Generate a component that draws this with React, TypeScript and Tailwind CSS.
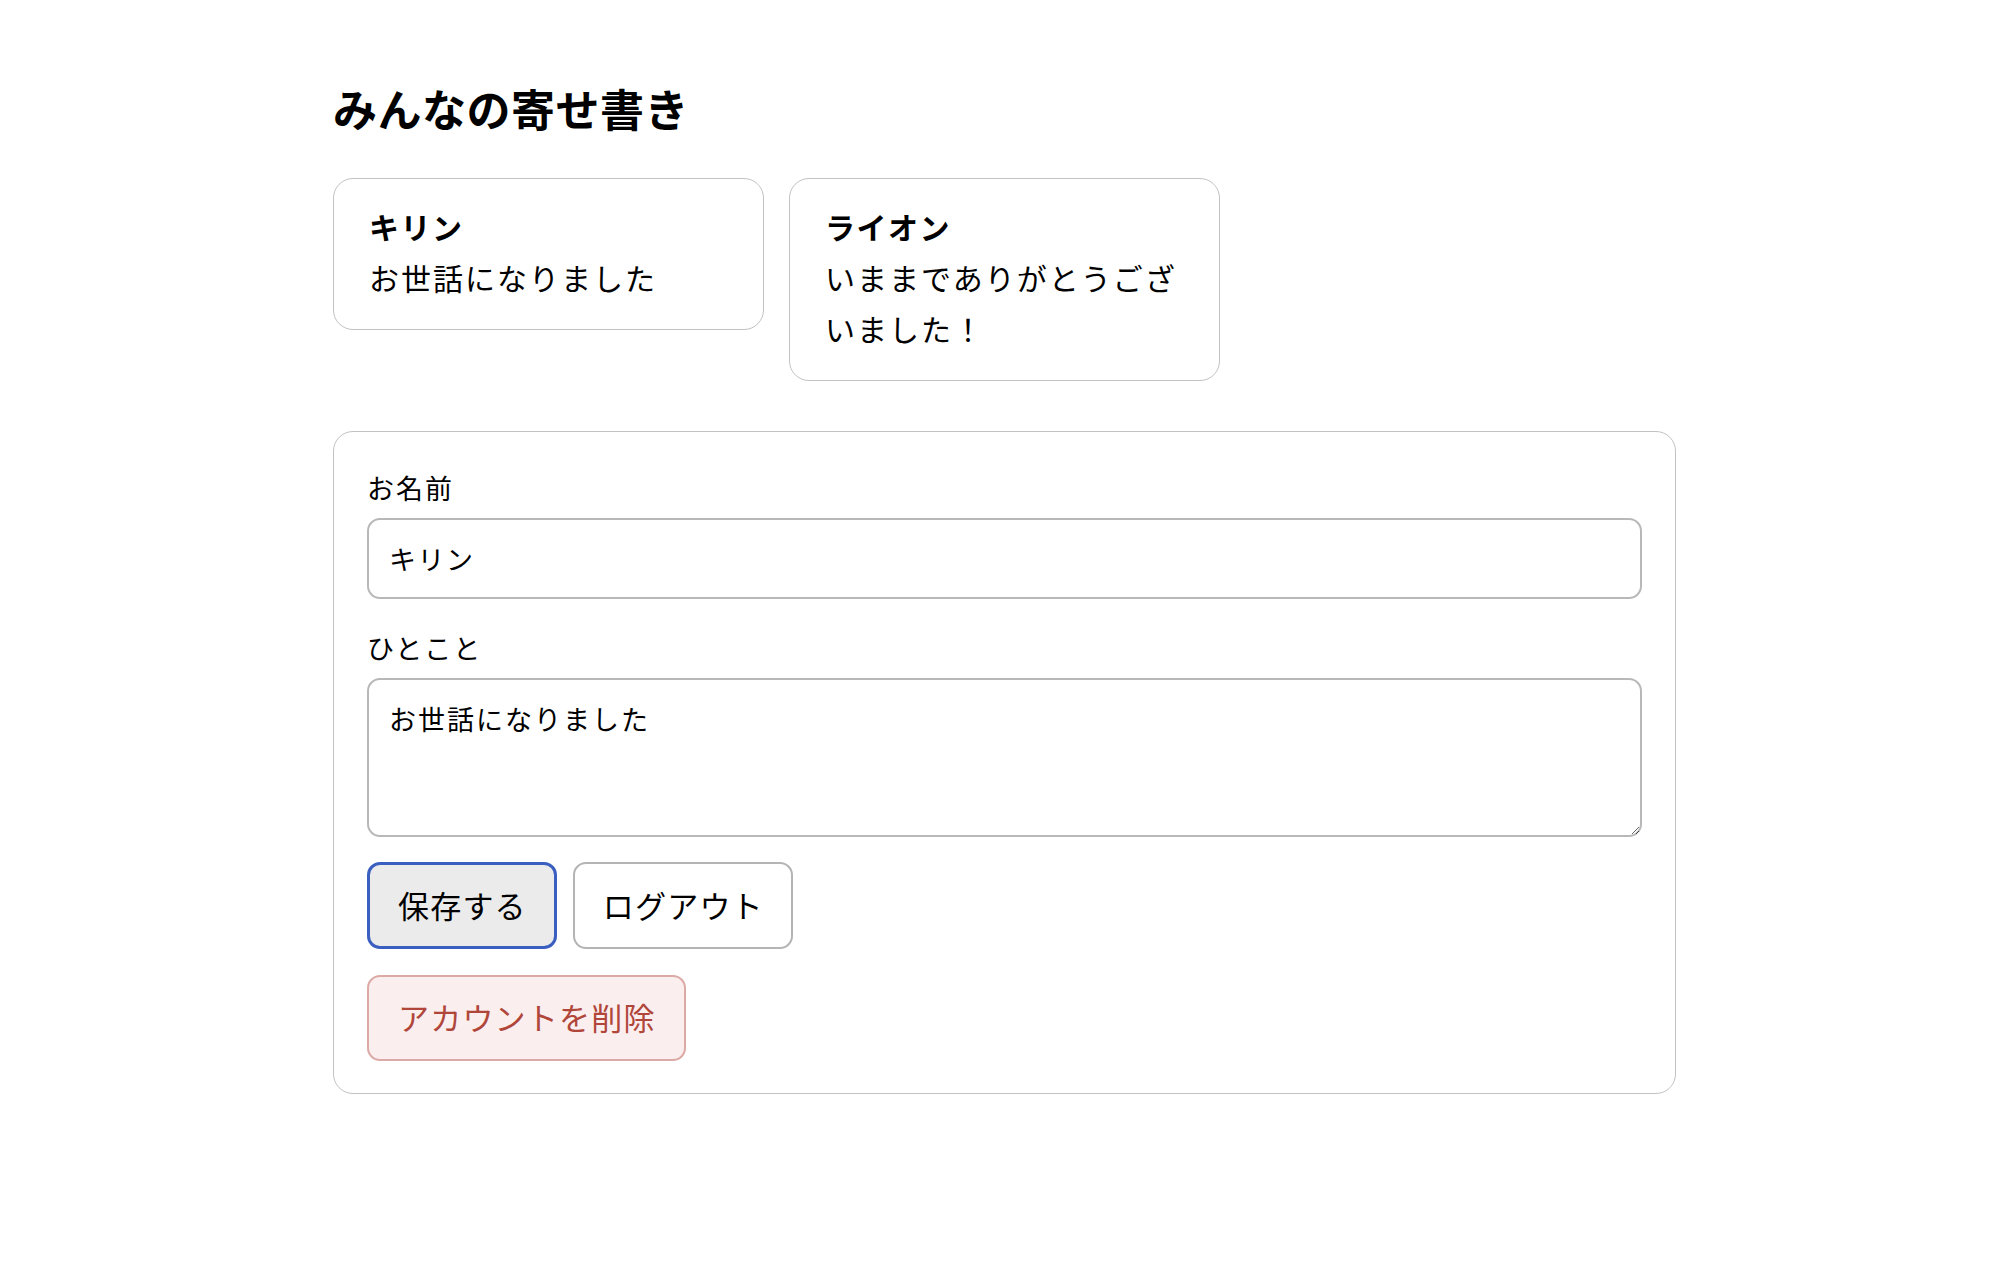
import React from "react";

const cards = [
  { name: "キリン", msg: "お世話になりました" },
  { name: "ライオン", msg: "いままでありがとうございました！" },
];

export default function App() {
  return (
    <div className="min-h-screen bg-white text-black font-['Noto_Sans_CJK_JP','Noto_Sans',sans-serif]">
      <div className="pl-[333px] pt-[78px] pb-[120px]">
        <h1 className="text-[44px] leading-[60px] font-bold mb-[40px] tracking-[0.5px]">みんなの寄せ書き</h1>
        <div className="flex items-start gap-[25px]">
          {cards.map((c) => (
            <div
              key={c.name}
              className="w-[431px] border border-[#c2c2c2] rounded-[20px] pl-[35px] pr-[34px] pt-[22px] pb-[26px] text-[30px] leading-[51px]"
            >
              <div className="font-bold tracking-[1.5px]">{c.name}</div>
              <div className="tracking-[2px]">{c.msg}</div>
            </div>
          ))}
        </div>
        <form
          className="mt-[50px] w-[1343px] border border-[#c2c2c2] rounded-[20px] px-[33px] pt-[36px] pb-[32px]"
          onSubmit={(e) => e.preventDefault()}
        >
          <label className="block text-[27px] tracking-[2px] leading-[40px] mb-[10px]">お名前</label>
          <input
            defaultValue="キリン"
            className="block w-full h-[81px] border-2 border-[#b8b8b8] rounded-[13px] px-[20px] text-[27px] tracking-[1.5px] outline-none bg-white"
          />
          <label className="block text-[27px] tracking-[2px] leading-[40px] mt-[29px] mb-[10px]">ひとこと</label>
          <textarea
            defaultValue="お世話になりました"
            className="block w-full h-[159px] border-2 border-[#b8b8b8] rounded-[13px] px-[20px] py-[17px] text-[27px] tracking-[2px] leading-[44px] outline-none bg-white"
          />
          <div className="flex gap-[16px] mt-[25px]">
            <button
              type="button"
              className="h-[87px] border-[3px] border-[#3a5fc0] bg-[#ebebeb] rounded-[13px] pl-[28px] pr-[27px] pb-[3px] text-[31px] tracking-[1.2px] leading-none text-black"
            >
              保存する
            </button>
            <button
              type="button"
              className="h-[87px] border-2 border-[#b4b4b4] bg-white rounded-[13px] pl-[28px] pr-[27px] pb-[3px] text-[31px] tracking-[1.2px] leading-none text-black"
            >
              ログアウト
            </button>
          </div>
          <button
            type="button"
            className="block mt-[26px] h-[86px] border-2 border-[#dcaaa6] bg-[#fbeeee] rounded-[13px] pl-[29px] pr-[28px] pb-[3px] text-[31px] tracking-[1.2px] leading-none text-[#b0463a]"
          >
            アカウントを削除
          </button>
        </form>
      </div>
    </div>
  );
}
